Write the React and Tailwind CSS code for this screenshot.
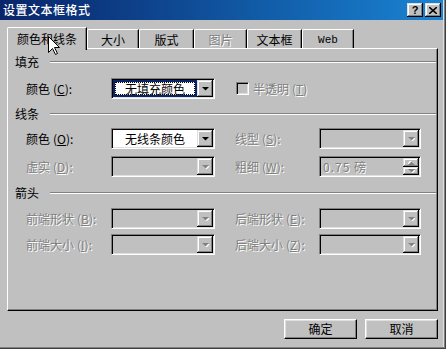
import React from 'react';

const font = "font-['Noto_Sans_CJK_SC',sans-serif]";
const dis = "text-[#808080] [text-shadow:1px_1px_0_#fff]";

function Key({ k }) {
  return <span className="underline underline-offset-1">{k}</span>;
}

function Label({ text, k, disabled, w = 'w-[85px]' }) {
  return (
    <div className={`${w} shrink-0 whitespace-nowrap ${disabled ? dis : 'text-black'}`}>
      {text}<span className="ml-[3px]">(</span><Key k={k} />):
    </div>
  );
}

function Arrow({ disabled, up }) {
  return (
    <svg width="7" height="4" viewBox="0 0 7 4" className={up ? 'rotate-180' : ''}>
      {disabled && <polygon points="1,1 8,1 4.5,4.5" fill="#fff" />}
      <polygon points="0,0 7,0 3.5,3.5" fill={disabled ? '#808080' : '#000'} />
    </svg>
  );
}

function Raised({ className = '', children }) {
  return (
    <div
      className={`flex items-center justify-center bg-[#c0c0c0] shadow-[inset_-1px_-1px_0_#000,inset_1px_1px_0_#dfdfdf,inset_-2px_-2px_0_#808080,inset_2px_2px_0_#fff] ${className}`}
    >
      {children}
    </div>
  );
}

function Combo({ w = 'w-[104px]', text, disabled, focused }) {
  return (
    <div
      className={`${w} h-[21px] flex p-[1px] border border-t-[#808080] border-l-[#808080] border-b-white border-r-white shadow-[inset_1px_1px_0_#000,inset_-1px_-1px_0_#dfdfdf]`}
    >
      <div
        className={`flex-1 flex items-center justify-center ${disabled ? 'bg-[#c0c0c0]' : 'bg-white'} ${
          focused ? 'shadow-[inset_0_0_0_2px_#0a246a] p-[2px]' : ''
        }`}
      >
        {focused ? (
          <div className="w-full h-full flex items-center justify-center border border-dotted border-black">
            {text}
          </div>
        ) : (
          text
        )}
      </div>
      <Raised className="w-[16px] h-[17px]">
        <Arrow disabled={disabled} />
      </Raised>
    </div>
  );
}

function Spinner() {
  return (
    <div className="w-[102px] h-[21px] flex p-[1px] border border-t-[#808080] border-l-[#808080] border-b-white border-r-white shadow-[inset_1px_1px_0_#000,inset_-1px_-1px_0_#dfdfdf]">
      <div className={`flex-1 flex items-center pl-[2px] tracking-[1px] ${dis}`}>0.75 磅</div>
      <div className="flex flex-col w-[16px]">
        <Raised className="h-[9px]">
          <Arrow disabled up />
        </Raised>
        <Raised className="h-[8px]">
          <Arrow disabled />
        </Raised>
      </div>
    </div>
  );
}

function Heading({ text }) {
  return (
    <div className="flex items-center h-[14px] pl-[7px]">
      <span className="leading-none">{text}</span>
      <div className="flex-1 ml-[11px] mr-[1px] h-[2px] border-t border-t-[#808080] border-b border-b-white" />
    </div>
  );
}

function Tab({ w, label, selected, disabled, mono }) {
  if (selected) {
    return (
      <div
        className={`${w} h-[23px] -mb-[2px] relative z-10 flex items-center justify-center bg-[#c0c0c0] border-l border-t border-white border-r border-r-black rounded-tl-[2px] shadow-[inset_-1px_0_0_#808080]`}
      >
        {label}
      </div>
    );
  }
  return (
    <div
      className={`${w} h-[19px] pt-[2px] flex items-center justify-center border-l border-t border-white border-r border-r-black rounded-tl-[2px] shadow-[inset_-1px_0_0_#808080] ${
        disabled ? dis : ''
      } ${mono ? "font-['Liberation_Mono',monospace] text-[11px]" : ''}`}
    >
      {label}
    </div>
  );
}

export default function App() {
  return (
    <div
      className={`relative w-[446px] h-[349px] bg-[#c0c0c0] text-[12px] leading-none text-black ${font} shadow-[inset_-1px_-1px_0_#404040,inset_-2px_-2px_0_#808080,inset_-3px_0_0_#dfdfdf]`}
    >
      {/* title bar */}
      <div className="w-[443px] h-[20px] flex items-center bg-linear-to-r from-[#0a246a] to-[#1a84d4] pr-[2px]">
        <span className="pl-[3px] text-white font-medium text-[12px] tracking-[0.5px]">设置文本框格式</span>
        <div className="ml-auto flex gap-[2px]">
          <Raised className="w-[16px] h-[14px] text-[11px] font-bold font-['Liberation_Sans',sans-serif]">?</Raised>
          <Raised className="w-[16px] h-[14px]">
            <svg width="8" height="7" viewBox="0 0 8 7">
              <path d="M0 0 L8 7 M8 0 L0 7" stroke="#000" strokeWidth="1.6" />
            </svg>
          </Raised>
        </div>
      </div>

      {/* tabs */}
      <div className="flex items-end h-[28px] pl-[7px]">
        <Tab w="w-[80px]" label="颜色和线条" selected />
        <Tab w="w-[52px]" label="大小" />
        <Tab w="w-[55px]" label="版式" />
        <Tab w="w-[53px]" label="图片" disabled />
        <Tab w="w-[55px]" label="文本框" />
        <Tab w="w-[52px]" label="Web" mono />
      </div>

      {/* panel */}
      <div className="ml-[7px] w-[431px] h-[263px] flex flex-col border-t border-l border-white border-r border-b border-r-black border-b-black shadow-[inset_-1px_-1px_0_#808080]">
        <div className="mt-[6px]">
          <Heading text="填充" />
        </div>
        <div className="mt-[9px] flex items-center h-[21px] pl-[18px]">
          <Label text="颜色" k="C" />
          <Combo text="无填充颜色" focused />
          <div className="ml-[21px] flex items-center gap-[4px]">
            <div className="w-[13px] h-[13px] border border-t-[#808080] border-l-[#808080] border-b-white border-r-white shadow-[inset_1px_1px_0_#000,inset_-1px_-1px_0_#dfdfdf] bg-[#c0c0c0]" />
            <span className={dis}>
              半透明<span className="ml-[3px]">(</span><Key k="T" />)
            </span>
          </div>
        </div>

        <div className="mt-[8px]">
          <Heading text="线条" />
        </div>
        <div className="mt-[7px] flex items-center h-[21px] pl-[18px]">
          <Label text="颜色" k="O" />
          <Combo text="无线条颜色" />
          <div className="ml-[20px] flex items-center">
            <Label text="线型" k="S" disabled w="w-[84px]" />
            <Combo w="w-[102px]" disabled />
          </div>
        </div>
        <div className="mt-[7px] flex items-center h-[21px] pl-[18px]">
          <Label text="虚实" k="D" disabled />
          <Combo disabled />
          <div className="ml-[20px] flex items-center">
            <Label text="粗细" k="W" disabled w="w-[84px]" />
            <Spinner />
          </div>
        </div>

        <div className="mt-[9px]">
          <Heading text="箭头" />
        </div>
        <div className="mt-[8px] flex items-center h-[21px] pl-[18px]">
          <Label text="前端形状" k="B" disabled />
          <Combo disabled />
          <div className="ml-[20px] flex items-center">
            <Label text="后端形状" k="E" disabled w="w-[84px]" />
            <Combo w="w-[102px]" disabled />
          </div>
        </div>
        <div className="mt-[5px] flex items-center h-[21px] pl-[18px]">
          <Label text="前端大小" k="I" disabled />
          <Combo disabled />
          <div className="ml-[20px] flex items-center">
            <Label text="后端大小" k="Z" disabled w="w-[84px]" />
            <Combo w="w-[102px]" disabled />
          </div>
        </div>
      </div>

      {/* buttons */}
      <div className="mt-[8px] flex justify-end gap-[8px] pr-[8px]">
        <button className="w-[73px] h-[20px] bg-[#c0c0c0] border-t border-l border-white border-r border-b border-r-black border-b-black shadow-[inset_-1px_-1px_0_#808080,inset_1px_1px_0_#dfdfdf]">
          确定
        </button>
        <button className="w-[73px] h-[20px] bg-[#c0c0c0] border-t border-l border-white border-r border-b border-r-black border-b-black shadow-[inset_-1px_-1px_0_#808080,inset_1px_1px_0_#dfdfdf]">
          取消
        </button>
      </div>

      {/* mouse pointer */}
      <svg className="absolute left-[48px] top-[36px] z-20" width="13" height="20" viewBox="0 0 13 20">
        <path
          d="M0.5 0.5 L0.5 16.5 L4.5 12.5 L7.5 18.5 L9.5 17.5 L6.5 11.5 L11.5 11.5 Z"
          fill="#fff"
          stroke="#000"
          strokeWidth="1"
        />
      </svg>
    </div>
  );
}
